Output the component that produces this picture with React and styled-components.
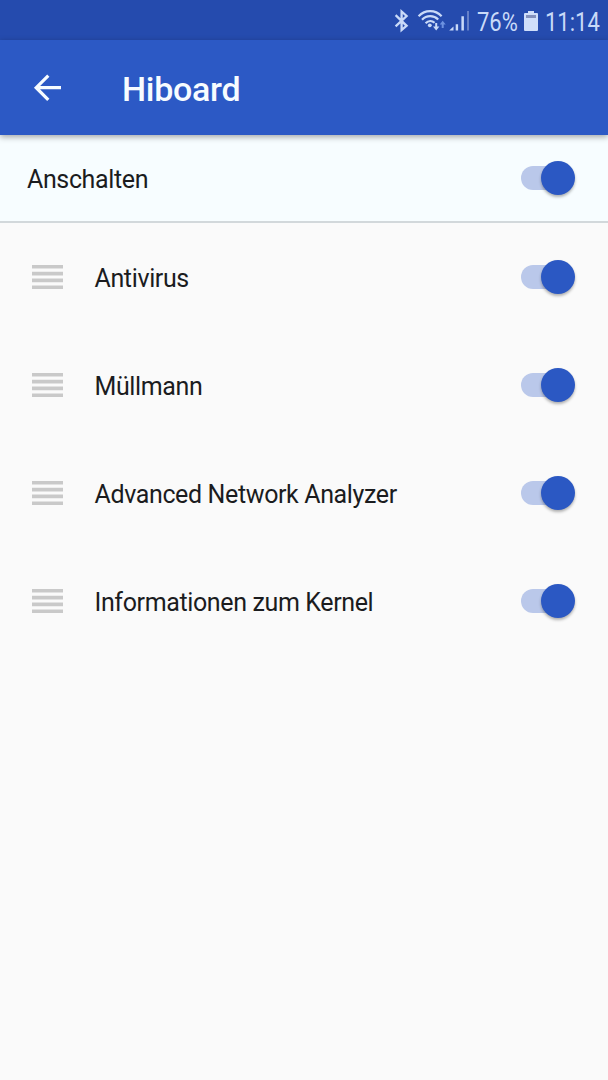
import styled, { createGlobalStyle } from "styled-components";

const entries = [
  "Antivirus",
  "Müllmann",
  "Advanced Network Analyzer",
  "Informationen zum Kernel",
];

const Toggle = () => (
  <Switch role="switch" aria-checked="true">
    <Track />
    <Thumb />
  </Switch>
);

const StatusIcons = () => (
  <svg width="80" height="26" viewBox="392 8 80 26" fill="none">
    <path
      d="M395.600 15.200L406.600 25.800L401.600 30V11.500L406.600 16L395.600 26.400"
      stroke="#c9daf8"
      strokeWidth="2.3"
    />
    <g stroke="#c9daf8" strokeWidth="2.2">
      <path d="M418.600 16.200C425 9.400 435.300 9.400 441.600 16.200" />
      <path d="M422 19.800C426.600 15 433.800 15 438.200 19.600" />
      <path d="M425.600 23.200C428.400 20.400 432 20.400 434.600 22.800" />
    </g>
    <circle cx="429.800" cy="25.300" r="1.9" fill="#c9daf8" />
    <path d="M435.200 23h2v3.600h2.200l-3.200 3.800l-3.200-3.800h2.200z" fill="#c9daf8" />
    <path d="M441.700 28h2v-3.400h2l-3-3.800l-3 3.800h2z" fill="#6d92e0" />
    <path d="M449.200 30.600l4.300-4.200v4.200z" fill="#c9daf8" />
    <path d="M455.700 24.200h2.400v6.400h-2.400zM461.400 16.200h2.500v14.400h-2.500z" fill="#c9daf8" />
    <path d="M467 11h2v19.600h-2z" fill="#6580c8" />
  </svg>
);

const Battery = () => (
  <svg width="14" height="20" viewBox="0 0 14 20">
    <path
      d="M4 0h6v2h3a1 1 0 0 1 1 1v16a1 1 0 0 1-1 1H1a1 1 0 0 1-1-1V3a1 1 0 0 1 1-1h3z"
      fill="#cfdefa"
    />
    <path d="M2 4h10v3H2z" fill="#8290bc" />
  </svg>
);

const App = () => {
  return (
    <Screen>
      <GlobalStyle />
      <StatusBar>
        <StatusIcons />
        <StatusText $width={41} $gap={5}>
          <span>76%</span>
        </StatusText>
        <BatterySlot>
          <Battery />
        </BatterySlot>
        <StatusText $width={56} $gap={7}>
          <span>11:14</span>
        </StatusText>
      </StatusBar>
      <AppBar>
        <BackButton aria-label="Zurück">
          <svg width="28" height="28" viewBox="0 0 28 28" fill="none">
            <path
              d="M28 13.700H3.500M15.300 1.600L3.200 13.700L15.300 25.800"
              stroke="#f7fcff"
              strokeWidth="3.200"
            />
          </svg>
        </BackButton>
        <Title>Hiboard</Title>
      </AppBar>
      <MasterRow>
        <Label>Anschalten</Label>
        <Toggle />
      </MasterRow>
      <List>
        {entries.map((name) => (
          <Row key={name}>
            <Handle width="31" height="24" viewBox="0 0 31 24">
              <path d="M0 0h31v3.600H0zM0 6.800h31v3.600H0zM0 13.600h31v3.600H0zM0 20.400h31v3.600H0z" />
            </Handle>
            <Label>{name}</Label>
            <Toggle />
          </Row>
        ))}
      </List>
    </Screen>
  );
};

export default App;

const GlobalStyle = createGlobalStyle`
  * {
    box-sizing: border-box;
  }
  body {
    margin: 0;
    background: #fafafa;
    font-family: Roboto, "Liberation Sans", sans-serif;
  }
`;

const Screen = styled.main`
  display: flex;
  flex-direction: column;
  width: 608px;
  height: 1080px;
  overflow: hidden;
  background: #fafafa;
`;

const StatusBar = styled.div`
  display: flex;
  justify-content: flex-end;
  align-items: center;
  flex: none;
  height: 40px;
  padding: 2px 7px 0 0;
  background: #254bae;
`;

const StatusText = styled.div`
  width: ${({ $width }) => $width}px;
  margin-left: ${({ $gap }) => $gap}px;
  padding-top: 4px;
  color: #c9daf8;
  font-size: 25px;
  line-height: 30px;
  white-space: nowrap;
  span {
    display: inline-block;
    transform: scaleX(0.88);
    transform-origin: left;
  }
`;

const BatterySlot = styled.div`
  display: flex;
  margin-left: 6px;
`;

const AppBar = styled.header`
  display: flex;
  align-items: center;
  flex: none;
  height: 95px;
  padding-left: 33px;
  background: #2c59c5;
  box-shadow: 0 2px 6px rgba(0, 0, 0, 0.35);
  z-index: 1;
`;

const BackButton = styled.button`
  display: flex;
  padding: 0;
  border: none;
  background: none;
`;

const Title = styled.h1`
  margin: 3px 0 0 61px;
  color: #f7fcff;
  font-size: 34px;
  font-weight: 500;
  line-height: 40px;
  letter-spacing: -0.3px;
`;

const MasterRow = styled.div`
  display: flex;
  align-items: center;
  flex: none;
  height: 88px;
  padding: 0 33px 0 27px;
  border-bottom: 2px solid #d2d8db;
  background: #f7fdff;
`;

const List = styled.div`
  display: flex;
  flex-direction: column;
`;

const Row = styled.div`
  display: flex;
  align-items: center;
  height: 108px;
  padding: 0 33px 0 32px;
`;

const Label = styled.span`
  flex: 1;
  padding-top: 3px;
  color: #1b1c1e;
  font-size: 25px;
  line-height: 30px;
  letter-spacing: -0.37px;
`;

const Handle = styled.svg`
  flex: none;
  margin-right: 31.5px;
  fill: #c9c9c9;
`;

const Switch = styled.div`
  display: flex;
  align-items: center;
  width: 54px;
  height: 34px;
`;

const Track = styled.div`
  width: 42px;
  height: 24px;
  border-radius: 12px;
  background: #bac8ea;
`;

const Thumb = styled.div`
  width: 34px;
  height: 34px;
  margin-left: -22px;
  border-radius: 50%;
  background: #2b58c3;
  box-shadow: 0 2px 3px rgba(0, 0, 0, 0.3);
`;
